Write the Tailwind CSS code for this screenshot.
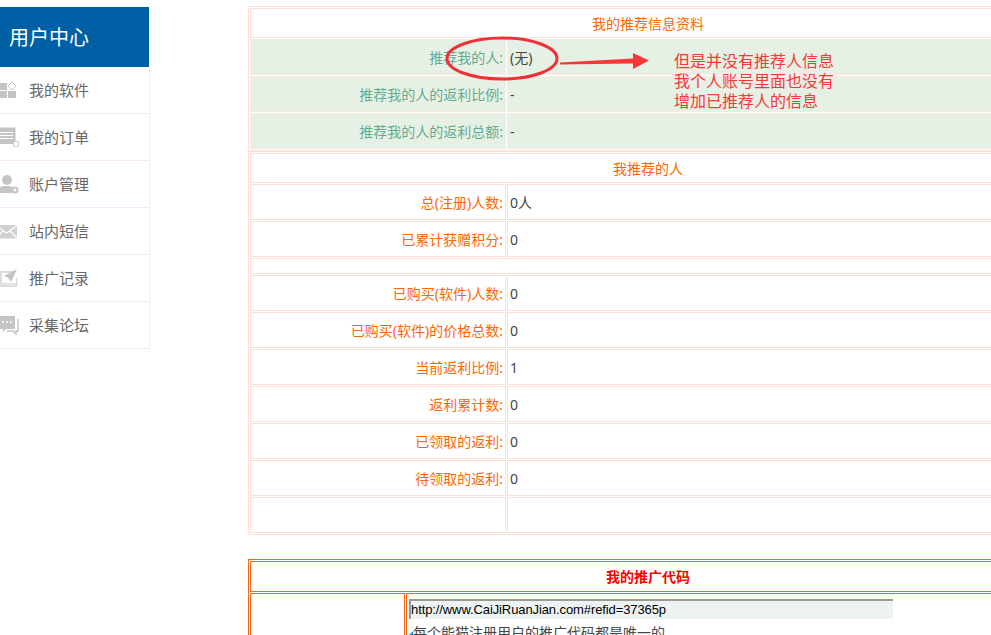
<!DOCTYPE html>
<html lang="zh-CN">
<head>
  <meta charset="UTF-8" />
  <title>用户中心</title>
  <script src="https://cdn.jsdelivr.net/npm/@tailwindcss/browser@4"></script>
</head>
<body class="bg-white">
<div class="relative flex w-[991px] h-[635px] overflow-hidden bg-white text-[14px] text-[#444] font-['Noto_Sans','Noto_Sans_CJK_SC',sans-serif]">

  <!-- Sidebar -->
  <aside class="w-[150px] shrink-0 mt-[7px] self-start">
    <div class="w-[149px] h-[60px] bg-[#0060a6] text-white text-[20px] leading-[61px] pl-[9px]">用户中心</div>
    <ul class="border-r border-[#f5eaee] text-[15px] text-[#666]">
      <li class="h-[47px] flex items-center border-b border-[#f8e8ee]">
        <svg class="w-[26px] h-[20px] ml-[-4px] mr-[7px] shrink-0" viewBox="0 0 26 20" fill="#c4c4c4"><rect x="0" y="3" width="11" height="7"/><rect x="0" y="11" width="11" height="7"/><rect x="12" y="11" width="8" height="7"/><path d="M16 2l4 4-4 4-4-4z" fill="none" stroke="#c4c4c4"/></svg>
        我的软件
      </li>
      <li class="h-[47px] flex items-center border-b border-[#f8e8ee]">
        <svg class="w-[26px] h-[20px] ml-[-4px] mr-[7px] shrink-0" viewBox="0 0 26 20" fill="#c4c4c4"><path d="M0 1l1.500-1 1.500 1 1.500-1 1.500 1 1.500-1 1.500 1 1.500-1 1.500 1 1.500-1 1.500 1 1.500-1 1.500 1 1.500-1 V17H0z"/><path d="M4 5.500h13M4 8.500h13M4 11.500h13" stroke="#fff" fill="none"/><circle cx="20" cy="17" r="3" fill="#fff" stroke="#c4c4c4"/></svg>
        我的订单
      </li>
      <li class="h-[47px] flex items-center border-b border-[#f8e8ee]">
        <svg class="w-[26px] h-[20px] ml-[-4px] mr-[7px] shrink-0" viewBox="0 0 26 20" fill="#c4c4c4"><circle cx="11" cy="6" r="5"/><path d="M0 19c0-5 4-7 11-7 2 0 4 .3 5 1v6z"/><circle cx="19" cy="16" r="2.500" fill="#fff" stroke="#c4c4c4" stroke-width="2"/></svg>
        账户管理
      </li>
      <li class="h-[47px] flex items-center border-b border-[#f8e8ee]">
        <svg class="w-[26px] h-[20px] ml-[-4px] mr-[7px] shrink-0" viewBox="0 0 26 20" fill="#d0d0d0"><rect x="0" y="4" width="21" height="13.500"/><path d="M0 4.500L10.500 12 21 4.500M0 17l7.500-7.500M21 17l-7.500-7.500" fill="none" stroke="#fff" stroke-width="1.200"/></svg>
        站内短信
      </li>
      <li class="h-[47px] flex items-center border-b border-[#f8e8ee]">
        <svg class="w-[26px] h-[20px] ml-[-4px] mr-[7px] shrink-0" viewBox="0 0 26 20" fill="#c4c4c4"><path d="M4 3h13v2H6v10h14v-5h1.500v9H0v-2h19.500v-.500H4z" fill="#dcdcdc"/><path d="M21 1L8 8l4 1.500L15 14z"/></svg>
        推广记录
      </li>
      <li class="h-[47px] flex items-center border-b border-[#f8e8ee]">
        <svg class="w-[26px] h-[20px] ml-[-4px] mr-[7px] shrink-0" viewBox="0 0 26 20" fill="#c4c4c4"><path d="M0 1h19v13H10l-3 3v-3H0z"/><circle cx="7" cy="7" r="1" fill="#fff"/><circle cx="11" cy="7" r="1" fill="#fff"/><circle cx="15" cy="7" r="1" fill="#fff"/><path d="M22 4v12h-2v3l-3-3h-6" fill="none" stroke="#c4c4c4" stroke-width="1.500"/></svg>
        采集论坛
      </li>
    </ul>
  </aside>

  <!-- Main -->
  <main class="ml-[98px] mt-[6px] w-[800px] shrink-0">
    <table class="w-full table-fixed border-separate border-spacing-[1px] border border-[#fde0d8]">
      <colgroup><col class="w-[256px]" /><col /></colgroup>
      <tr><td colspan="2" class="h-[30px] border border-[#fde0d8] text-[#ff6600]"><span class="relative left-[341px]">我的推荐信息资料</span></td></tr>
      <tr class="bg-[#e7f0e4]"><td class="h-[36px] border border-[#fde8e2] text-right text-[#5fae93] pr-[2px]">推荐我的人:</td><td class="border border-[#fde8e2] pl-[2px]">(无)</td></tr>
      <tr class="bg-[#e7f0e4]"><td class="h-[36px] border border-[#fde8e2] text-right text-[#5fae93] pr-[2px]">推荐我的人的返利比例:</td><td class="border border-[#fde8e2] pl-[2px]">-</td></tr>
      <tr class="bg-[#e7f0e4]"><td class="h-[36px] border border-[#fde8e2] text-right text-[#5fae93] pr-[2px]">推荐我的人的返利总额:</td><td class="border border-[#fde8e2] pl-[2px]">-</td></tr>
    </table>

    <table class="w-full table-fixed border-separate border-spacing-[1px] border border-[#fde0d8]">
      <colgroup><col class="w-[256px]" /><col /></colgroup>
      <tr><td colspan="2" class="h-[30px] border border-[#fde0d8] text-[#ff6600]"><span class="relative left-[362px]">我推荐的人</span></td></tr>
      <tr><td class="h-[36px] border border-[#fde0d8] text-right text-[#ff6600] pr-[2px]">总(注册)人数:</td><td class="border border-[#fde0d8] pl-[2px]">0人</td></tr>
      <tr><td class="h-[36px] border border-[#fde0d8] text-right text-[#ff6600] pr-[2px]">已累计获赠积分:</td><td class="border border-[#fde0d8] pl-[2px]">0</td></tr>
      <tr><td colspan="2" class="h-[16px] border border-[#fde0d8]"></td></tr>
      <tr><td class="h-[36px] border border-[#fde0d8] text-right text-[#ff6600] pr-[2px]">已购买(软件)人数:</td><td class="border border-[#fde0d8] pl-[2px]">0</td></tr>
      <tr><td class="h-[36px] border border-[#fde0d8] text-right text-[#ff6600] pr-[2px]">已购买(软件)的价格总数:</td><td class="border border-[#fde0d8] pl-[2px]">0</td></tr>
      <tr><td class="h-[36px] border border-[#fde0d8] text-right text-[#ff6600] pr-[2px]">当前返利比例:</td><td class="border border-[#fde0d8] pl-[2px]">1</td></tr>
      <tr><td class="h-[36px] border border-[#fde0d8] text-right text-[#ff6600] pr-[2px]">返利累计数:</td><td class="border border-[#fde0d8] pl-[2px]">0</td></tr>
      <tr><td class="h-[36px] border border-[#fde0d8] text-right text-[#ff6600] pr-[2px]">已领取的返利:</td><td class="border border-[#fde0d8] pl-[2px]">0</td></tr>
      <tr><td class="h-[36px] border border-[#fde0d8] text-right text-[#ff6600] pr-[2px]">待领取的返利:</td><td class="border border-[#fde0d8] pl-[2px]">0</td></tr>
      <tr><td class="h-[36px] border border-[#fde0d8]"></td><td class="border border-[#fde0d8]"></td></tr>
    </table>

    <table class="w-full table-fixed border-separate border-spacing-[1px] border border-[#ee6a1a] mt-[24px]">
      <colgroup><col class="w-[155px]" /><col /></colgroup>
      <tr><td colspan="2" class="h-[31px] border border-[#ee6a1a] font-bold text-[#ff0000]"><span class="relative left-[355px]">我的推广代码</span></td></tr>
      <tr>
        <td class="border border-[#ee6a1a]"></td>
        <td class="border border-[#ee6a1a] align-top pt-[5px] pl-[2px]">
          <div class="w-[484px] h-[20px] bg-[#edf2f2] border-t-2 border-l-2 border-[#999] text-black text-[13px] tracking-[-0.1px] leading-[18px] font-['Liberation_Sans',sans-serif]">http://www.CaiJiRuanJian.com#refid=37365p</div>
          <div class="mt-[3px] h-[60px] flex items-start">
            <span class="mt-[9px] w-0 h-0 border-l-[4px] border-l-transparent border-b-[4px] border-b-[#3a85c8]"></span>
            <span>每个能猫注册用户的推广代码都是唯一的</span>
          </div>
        </td>
      </tr>
    </table>
  </main>

  <!-- Screenshot annotation -->
  <svg class="absolute left-0 top-0 w-[991px] h-[635px] pointer-events-none" viewBox="0 0 991 635">
    <ellipse cx="502" cy="58.500" rx="55" ry="20.500" fill="none" stroke="#f03038" stroke-width="3" />
    <path d="M560 62.500L633 58.500V53L649 60.500L633 69V63.500L560 64.500Z" fill="#f83838" />
  </svg>
  <div class="absolute left-[674px] top-[51px] text-[16px] leading-[20px] text-[#f83838]">
    <p>但是并没有推荐人信息</p>
    <p>我个人账号里面也没有</p>
    <p>增加已推荐人的信息</p>
  </div>
</div>
</body>
</html>
